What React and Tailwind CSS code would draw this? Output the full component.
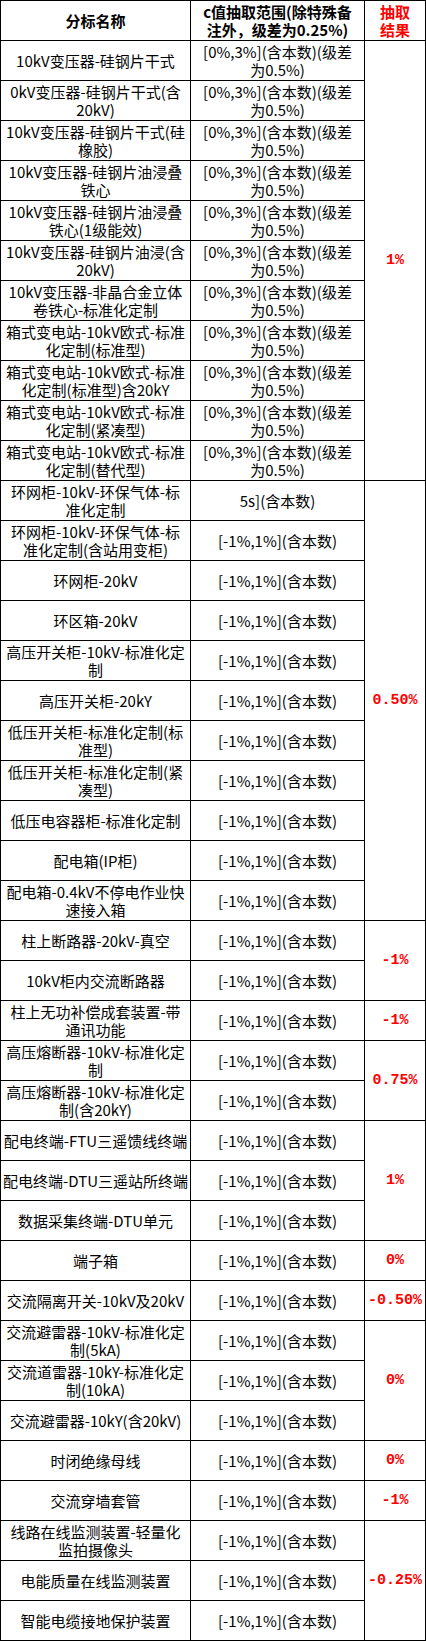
const A = ['[0%,3%](含本数)(级差', '为0.5%)']
const B = ['[-1%,1%](含本数)']

const SPAN = {
  1: 'row-span-1',
  2: 'row-span-2',
  3: 'row-span-3',
  11: 'row-span-11',
}

const groups = [
  {
    result: '1%',
    rows: [
      [['10kV变压器-硅钢片干式'], A],
      [['0kV变压器-硅钢片干式(含', '20kV)'], A],
      [['10kV变压器-硅钢片干式(硅', '橡胶)'], A],
      [['10kV变压器-硅钢片油浸叠', '铁心'], A],
      [['10kV变压器-硅钢片油浸叠', '铁心(1级能效)'], A],
      [['10kV变压器-硅钢片油浸(含', '20kV)'], A],
      [['10kV变压器-非晶合金立体', '卷铁心-标准化定制'], A],
      [['箱式变电站-10kV欧式-标准', '化定制(标准型)'], A],
      [['箱式变电站-10kV欧式-标准', '化定制(标准型)含20kY'], A],
      [['箱式变电站-10kV欧式-标准', '化定制(紧凑型)'], A],
      [['箱式变电站-10kV欧式-标准', '化定制(替代型)'], A],
    ],
  },
  {
    result: '0.50%',
    rows: [
      [['环网柜-10kV-环保气体-标', '准化定制'], ['5s](含本数)']],
      [['环网柜-10kV-环保气体-标', '准化定制(含站用变柜)'], B],
      [['环网柜-20kV'], B],
      [['环区箱-20kV'], B],
      [['高压开关柜-10kV-标准化定', '制'], B],
      [['高压开关柜-20kY'], B],
      [['低压开关柜-标准化定制(标', '准型)'], B],
      [['低压开关柜-标准化定制(紧', '凑型)'], B],
      [['低压电容器柜-标准化定制'], B],
      [['配电箱(IP柜)'], B],
      [['配电箱-0.4kV不停电作业快', '速接入箱'], B],
    ],
  },
  {
    result: '-1%',
    rows: [
      [['柱上断路器-20kV-真空'], B],
      [['10kV柜内交流断路器'], B],
    ],
  },
  {
    result: '-1%',
    rows: [[['柱上无功补偿成套装置-带', '通讯功能'], B]],
  },
  {
    result: '0.75%',
    rows: [
      [['高压熔断器-10kV-标准化定', '制'], B],
      [['高压熔断器-10kV-标准化定', '制(含20kY)'], B],
    ],
  },
  {
    result: '1%',
    rows: [
      [['配电终端-FTU三遥馈线终端'], B],
      [['配电终端-DTU三遥站所终端'], B],
      [['数据采集终端-DTU单元'], B],
    ],
  },
  { result: '0%', rows: [[['端子箱'], B]] },
  { result: '-0.50%', rows: [[['交流隔离开关-10kV及20kV'], B]] },
  {
    result: '0%',
    rows: [
      [['交流避雷器-10kV-标准化定', '制(5kA)'], B],
      [['交流道雷器-10kY-标准化定', '制(10kA)'], B],
      [['交流避雷器-10kY(含20kV)'], B],
    ],
  },
  { result: '0%', rows: [[['时闭绝缘母线'], B]] },
  { result: '-1%', rows: [[['交流穿墙套管'], B]] },
  {
    result: '-0.25%',
    rows: [
      [['线路在线监测装置-轻量化', '监拍摄像头'], B],
      [['电能质量在线监测装置'], B],
      [['智能电缆接地保护装置'], B],
    ],
  },
]

const cell = 'bg-white flex flex-col items-center justify-center text-center whitespace-nowrap overflow-hidden'

function Lines({ lines }) {
  return lines.map((l, i) => <span key={i}>{l}</span>)
}

export default function App() {
  const items = []
  groups.forEach((g, gi) => {
    g.rows.forEach(([name, range], ri) => {
      items.push(
        <div key={`n${gi}-${ri}`} className={cell}>
          <Lines lines={name} />
        </div>
      )
      items.push(
        <div key={`r${gi}-${ri}`} className={cell}>
          <Lines lines={range} />
        </div>
      )
      if (ri === 0) {
        items.push(
          <div
            key={`g${gi}`}
            className={`${cell} ${SPAN[g.rows.length]} font-['Liberation_Mono',monospace] font-bold text-[#ff0000]`}
          >
            {g.result}
          </div>
        )
      }
    })
  })

  return (
    <div className="w-[426px] bg-white">
      <div className="grid grid-cols-[189px_173px_60px] auto-rows-[39px] gap-px bg-black p-px text-[15px] leading-[18px] text-black font-['Noto_Sans_CJK_SC',sans-serif]">
        {/* Header */}
        <div className={`${cell} font-bold`}>分标名称</div>
        <div className={`${cell} font-bold`}>
          <span>c值抽取范围(除特殊备</span>
          <span>注外，级差为0.25%)</span>
        </div>
        <div className={`${cell} font-bold text-[#ff0000]`}>
          <span>抽取</span>
          <span>结果</span>
        </div>
        {items}
      </div>
    </div>
  )
}
